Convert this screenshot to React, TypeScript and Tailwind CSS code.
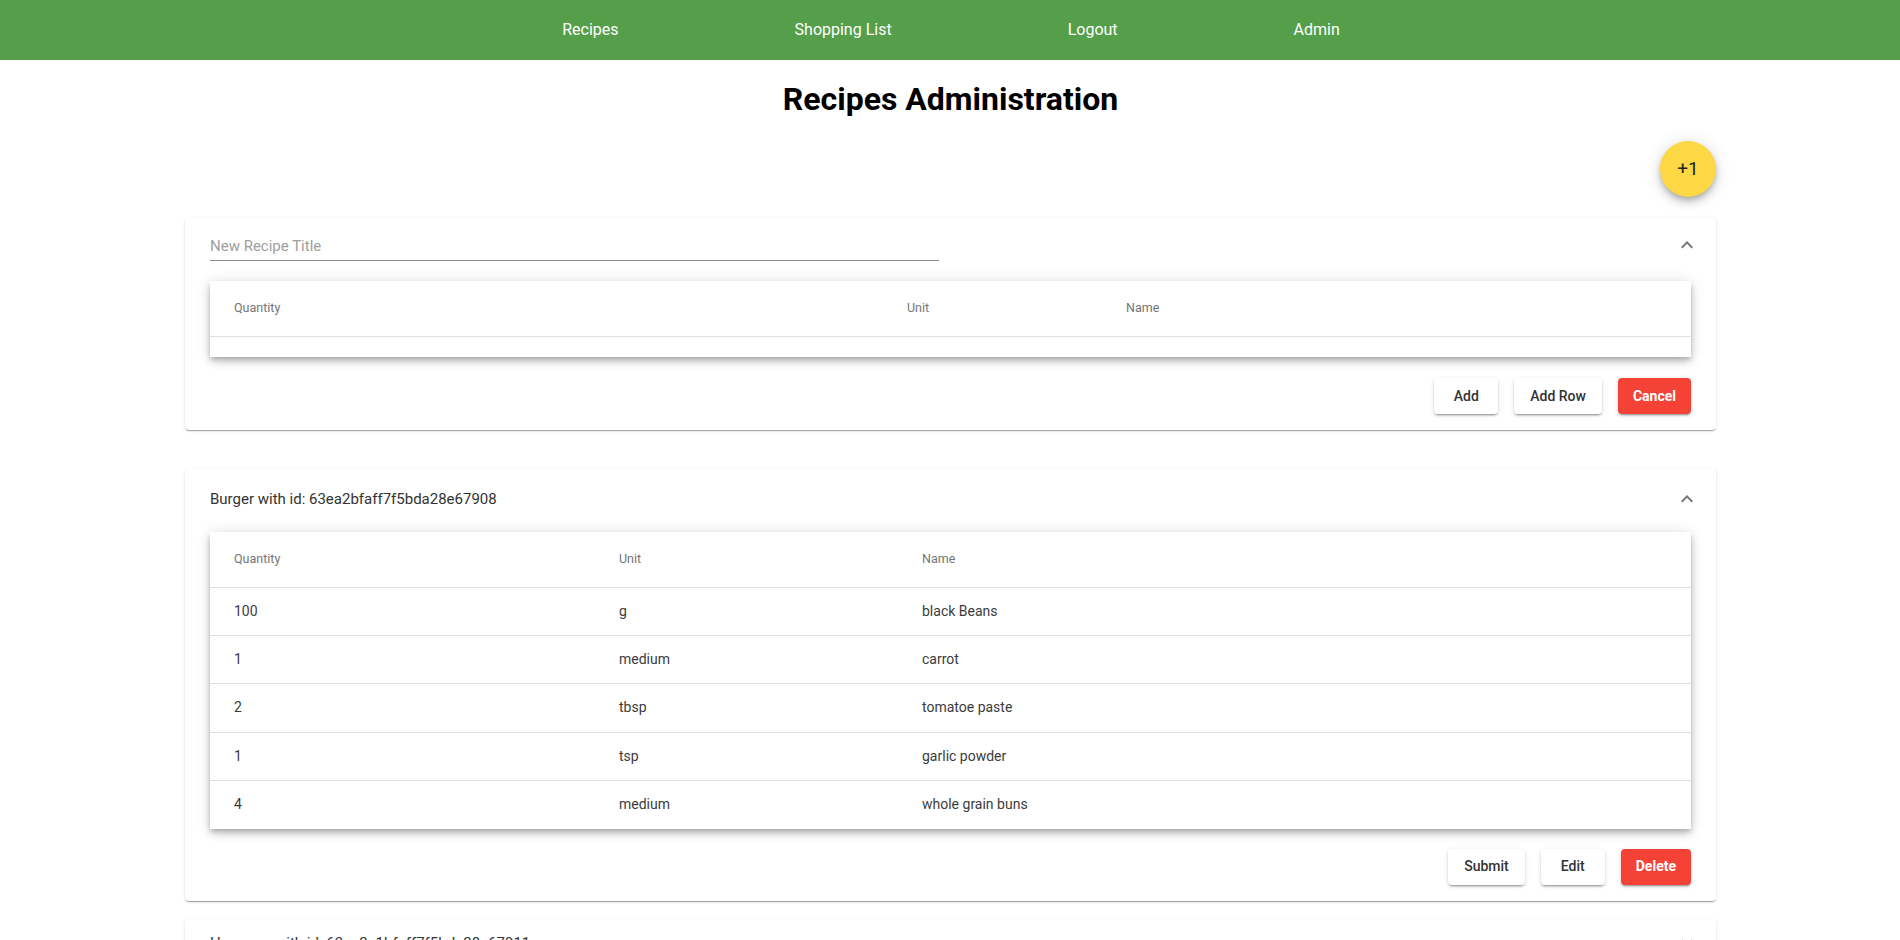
import React from "react";

const ChevronUp = () => (
  <svg width="24" height="24" viewBox="0 0 24 24" className="fill-[rgba(0,0,0,0.54)]">
    <path d="M12 8l-6 6 1.41 1.41L12 10.83l4.59 4.58L18 14z" />
  </svg>
);

const ChevronDown = () => (
  <svg width="24" height="24" viewBox="0 0 24 24" className="fill-[rgba(0,0,0,0.54)]">
    <path d="M16.59 8.59 12 13.17 7.41 8.59 6 10l6 6 6-6z" />
  </svg>
);

const cardShadow =
  "shadow-[0_2px_1px_-1px_rgba(0,0,0,0.2),0_1px_1px_0_rgba(0,0,0,0.14),0_1px_3px_0_rgba(0,0,0,0.12)]";
const tableShadow =
  "shadow-[0_3px_5px_-1px_rgba(0,0,0,0.2),0_5px_8px_0_rgba(0,0,0,0.14),0_1px_14px_0_rgba(0,0,0,0.12)]";
const btnShadow =
  "shadow-[0_3px_1px_-2px_rgba(0,0,0,0.2),0_2px_2px_0_rgba(0,0,0,0.14),0_1px_5px_0_rgba(0,0,0,0.12)]";

function Btn({ children, red }: { children: React.ReactNode; red?: boolean }) {
  return (
    <button
      className={
        red
          ? `h-[36px] min-w-[64px] px-[15px] rounded-[4px] bg-[#f44336] text-white text-[14px] font-bold ${btnShadow}`
          : `h-[36px] min-w-[64px] px-[16px] rounded-[4px] bg-white text-[#333333] text-[14px] font-medium ${btnShadow}`
      }
    >
      {children}
    </button>
  );
}

const rows = [
  ["100", "g", "black Beans"],
  ["1", "medium", "carrot"],
  ["2", "tbsp", "tomatoe paste"],
  ["1", "tsp", "garlic powder"],
  ["4", "medium", "whole grain buns"],
];

export default function App() {
  return (
    <div className="min-h-screen bg-white font-['Roboto',sans-serif]">
      <nav className="h-[60px] bg-[#559e4a] flex items-center justify-center gap-[176px] text-white text-[16px]">
        <span className="ml-[2px]">Recipes</span>
        <span>Shopping List</span>
        <span>Logout</span>
        <span>Admin</span>
      </nav>

      <div className="w-[1531px] ml-[185px] pb-10">
        <h1 className="mt-[19px] text-center text-[32px] leading-[40px] font-bold text-black">
          Recipes Administration
        </h1>

        <div className="mt-[22px] flex justify-end">
          <button
            className={`w-[56px] h-[56px] rounded-full bg-[#fdd744] text-[#222] text-[19px] flex items-center justify-center shadow-[0_3px_5px_-1px_rgba(0,0,0,0.2),0_6px_10px_0_rgba(0,0,0,0.14),0_1px_18px_0_rgba(0,0,0,0.12)]`}
          >
            +1
          </button>
        </div>

        {/* New recipe card */}
        <div className={`mt-[20px] bg-white rounded-[4px] ${cardShadow}`}>
          <div className="h-[56px] pl-[25px] pr-[17px] flex items-center justify-between">
            <div className="w-[729px] h-[28px] mt-[3px] border-b border-[#8a8a8a] flex items-center">
              <span className="text-[15px] text-[#9e9e9e]">New Recipe Title</span>
            </div>
            <ChevronUp />
          </div>
          <div className="px-[25px]">
            <div className={`mt-[8px] bg-white ${tableShadow}`}>
              <div className="h-[56px] grid grid-cols-[673px_219px_1fr] items-center border-b border-[#e0e0e0] text-[12.5px] text-[#757575]">
                <div className="pl-[24px]">Quantity</div>
                <div className="pl-[24px]">Unit</div>
                <div className="pl-[24px]">Name</div>
              </div>
              <div className="h-[20px]" />
            </div>
            <div className="mt-[21px] pb-[16px] flex justify-end gap-4">
              <Btn>Add</Btn>
              <Btn>Add Row</Btn>
              <Btn red>Cancel</Btn>
            </div>
          </div>
        </div>

        {/* Burger card */}
        <div className={`mt-[39px] bg-white rounded-[4px] ${cardShadow}`}>
          <div className="h-[60px] pl-[25px] pr-[17px] flex items-center justify-between">
            <span className="text-[15px] text-[#333333]">Burger with id: 63ea2bfaff7f5bda28e67908</span>
            <ChevronUp />
          </div>
          <div className="px-[25px]">
            <div className={`mt-[3px] bg-white ${tableShadow}`}>
              <div className="h-[56px] grid grid-cols-[385px_303px_1fr] items-center border-b border-[#e0e0e0] text-[12.5px] text-[#757575]">
                <div className="pl-[24px]">Quantity</div>
                <div className="pl-[24px]">Unit</div>
                <div className="pl-[24px]">Name</div>
              </div>
              {rows.map((r, i) => (
                <div
                  key={i}
                  className={`h-[48.2px] grid grid-cols-[385px_303px_1fr] items-center text-[14px] text-[#3c3c3c] ${
                    i < rows.length - 1 ? "border-b border-[#e0e0e0]" : ""
                  }`}
                >
                  <div className="pl-[24px]">{r[0]}</div>
                  <div className="pl-[24px]">{r[1]}</div>
                  <div className="pl-[24px]">{r[2]}</div>
                </div>
              ))}
            </div>
            <div className="mt-[20px] pb-[16px] flex justify-end gap-4">
              <Btn>Submit</Btn>
              <Btn>Edit</Btn>
              <Btn red>Delete</Btn>
            </div>
          </div>
        </div>

        {/* Collapsed card */}
        <div className={`mt-[18px] bg-white rounded-[4px] ${cardShadow}`}>
          <div className="h-[48px] pl-[25px] pr-[17px] flex items-center justify-between">
            <span className="text-[15px] text-[#333333]">Hummus with id: 63ea2c1bfaff7f5bda28e67911</span>
            <ChevronDown />
          </div>
        </div>
      </div>
    </div>
  );
}
